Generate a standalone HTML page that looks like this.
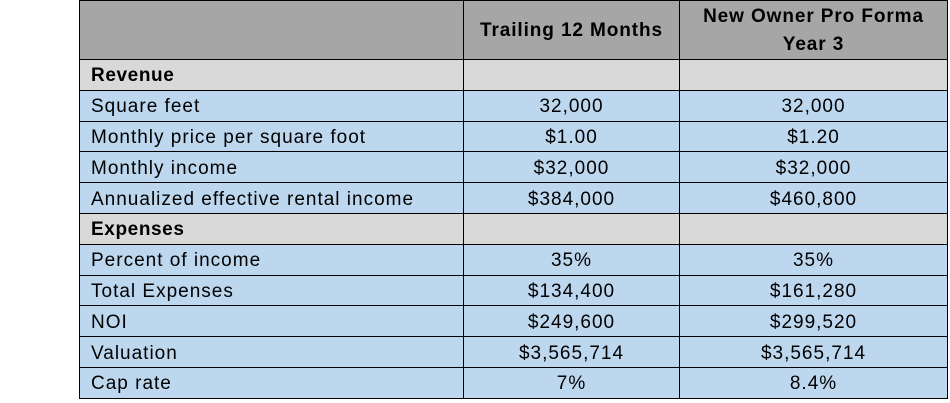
<!DOCTYPE html>
<html><head><style>
body{margin:0;width:950px;height:403px;background:#fff;overflow:hidden;font-family:"Liberation Sans",sans-serif;}
table{position:absolute;left:79px;top:0;border-collapse:collapse;table-layout:fixed;width:868px;}
td{border:1.5px solid #000;padding:3px 0 0 11px;height:26.8px;font-size:19px;letter-spacing:1px;color:#000;white-space:nowrap;background:#bdd7ee;line-height:20px;}
td.c{text-align:center;padding:3px 0 0 0;}
tr.h td{background:#a6a6a6;height:56px;font-weight:bold;font-size:19px;letter-spacing:0.9px;line-height:28px;padding-top:2px;}
tr.s td{background:#d9d9d9;font-weight:bold;letter-spacing:0.6px;}
</style></head><body>
<table>
<colgroup><col style="width:384px"><col style="width:216px"><col style="width:268px"></colgroup>
<tr class="h"><td></td><td class="c">Trailing 12 Months</td><td class="c">New Owner Pro Forma<br>Year 3</td></tr>
<tr class="s"><td>Revenue</td><td></td><td></td></tr>
<tr><td>Square feet</td><td class="c">32,000</td><td class="c">32,000</td></tr>
<tr><td>Monthly price per square foot</td><td class="c">$1.00</td><td class="c">$1.20</td></tr>
<tr><td>Monthly income</td><td class="c">$32,000</td><td class="c">$32,000</td></tr>
<tr><td>Annualized effective rental income</td><td class="c">$384,000</td><td class="c">$460,800</td></tr>
<tr class="s"><td>Expenses</td><td></td><td></td></tr>
<tr><td>Percent of income</td><td class="c">35%</td><td class="c">35%</td></tr>
<tr><td>Total Expenses</td><td class="c">$134,400</td><td class="c">$161,280</td></tr>
<tr><td>NOI</td><td class="c">$249,600</td><td class="c">$299,520</td></tr>
<tr><td>Valuation</td><td class="c">$3,565,714</td><td class="c">$3,565,714</td></tr>
<tr><td>Cap rate</td><td class="c">7%</td><td class="c">8.4%</td></tr>
</table>
</body></html>
